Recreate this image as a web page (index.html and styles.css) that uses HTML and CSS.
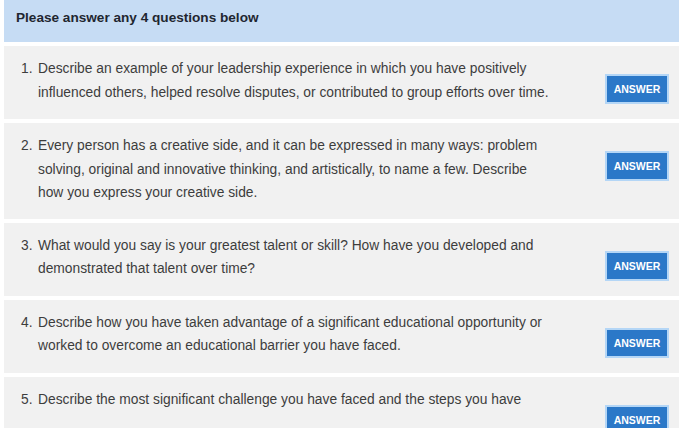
FILE: index.html
```html
<!DOCTYPE html>
<html>
<head>
<meta charset="utf-8">
<link rel="stylesheet" href="styles.css">
</head>
<body>
<div class="page">
  <div class="header">Please answer any 4 questions below</div>
  <div class="card">
    <div class="num">1.</div>
    <div class="text">Describe an example of your leadership experience in which you have positively<br>influenced others, helped resolve disputes, or contributed to group efforts over time.</div>
    <button class="btn">ANSWER</button>
  </div>
  <div class="card">
    <div class="num">2.</div>
    <div class="text">Every person has a creative side, and it can be expressed in many ways: problem<br>solving, original and innovative thinking, and artistically, to name a few. Describe<br>how you express your creative side.</div>
    <button class="btn">ANSWER</button>
  </div>
  <div class="card">
    <div class="num">3.</div>
    <div class="text">What would you say is your greatest talent or skill? How have you developed and<br>demonstrated that talent over time?</div>
    <button class="btn">ANSWER</button>
  </div>
  <div class="card">
    <div class="num">4.</div>
    <div class="text">Describe how you have taken advantage of a significant educational opportunity or<br>worked to overcome an educational barrier you have faced.</div>
    <button class="btn">ANSWER</button>
  </div>
  <div class="card">
    <div class="num">5.</div>
    <div class="text">Describe the most significant challenge you have faced and the steps you have</div>
    <button class="btn">ANSWER</button>
  </div>
</div>
</body>
</html>
```
FILE: styles.css
```css
html, body {
  margin: 0;
  padding: 0;
  background: #ffffff;
  overflow: hidden;
}
.page {
  width: 675px;
  margin-left: 4px;
  display: flex;
  flex-direction: column;
  gap: 4px;
  font-family: "Liberation Sans", Arial, sans-serif;
}
.header {
  background: #c6dcf4;
  height: 42px;
  box-sizing: border-box;
  padding: 10px 0 0 12px;
  font-size: 13.6px;
  font-weight: bold;
  color: #1f2630;
}
.card {
  background: #f1f1f1;
  display: flex;
  align-items: flex-start;
  padding: 11px 12px 14px 17px;
  min-height: 48px;
  color: #3d3d3d;
  font-size: 13.8px;
  line-height: 23.5px;
}
.num {
  width: 17px;
  flex: none;
}
.text {
  flex: 1;
}
.btn {
  flex: none;
  margin-top: 19px;
  width: 60px;
  height: 26px;
  border: none;
  background: #2b78c8;
  color: #ffffff;
  font-family: "Liberation Sans", Arial, sans-serif;
  font-size: 10.5px;
  font-weight: bold;
  padding: 0;
  box-shadow: 0 0 0 2px #b4d6f6;
}
```
